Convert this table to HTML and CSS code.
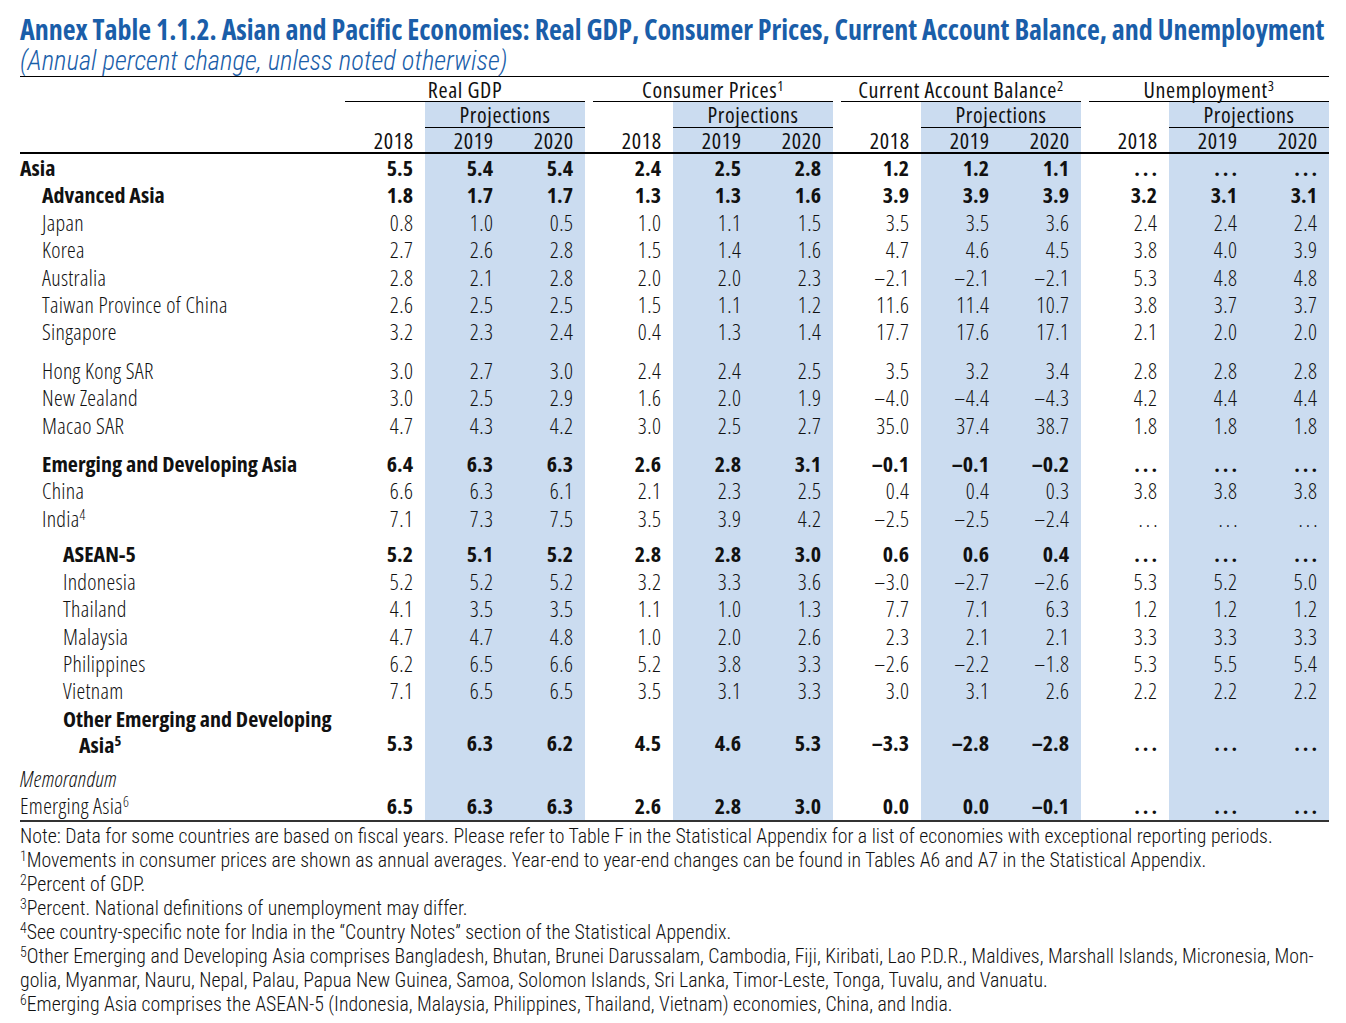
FILE: index.html
```html
<!DOCTYPE html>
<html lang="en">
<head>
<meta charset="utf-8">
<title>Annex Table 1.1.2</title>
<link rel="stylesheet" href="styles.css">
</head>
<body>
<div class="page">
  <h1 class="title">Annex Table 1.1.2. Asian and Pacific Economies: Real GDP, Consumer Prices, Current Account Balance, and Unemployment</h1>
  <p class="subtitle">(Annual percent change, unless noted otherwise)</p>
  <table class="data">
    <colgroup>
      <col class="c-name">
      <col class="c-num"><col class="c-num"><col class="c-num"><col class="c-sp">
      <col class="c-num"><col class="c-num"><col class="c-num"><col class="c-sp">
      <col class="c-num"><col class="c-num"><col class="c-num"><col class="c-sp">
      <col class="c-num"><col class="c-num"><col class="c-num">
    </colgroup>
    <thead>
      <tr class="hr1">
        <th></th>
        <th colspan="3" class="grp">Real GDP</th><th class="s"></th>
        <th colspan="3" class="grp">Consumer Prices<sup>1</sup></th><th class="s"></th>
        <th colspan="3" class="grp">Current Account Balance<sup>2</sup></th><th class="s"></th>
        <th colspan="3" class="grp">Unemployment<sup>3</sup></th>
      </tr>
      <tr class="hr2">
        <th></th>
        <th></th><th colspan="2" class="proj">Projections</th><th class="s"></th>
        <th></th><th colspan="2" class="proj">Projections</th><th class="s"></th>
        <th></th><th colspan="2" class="proj">Projections</th><th class="s"></th>
        <th></th><th colspan="2" class="proj">Projections</th>
      </tr>
      <tr class="hr3">
        <th></th>
        <th>2018</th><th class="p">2019</th><th class="p">2020</th><th class="s"></th>
        <th>2018</th><th class="p">2019</th><th class="p">2020</th><th class="s"></th>
        <th>2018</th><th class="p">2019</th><th class="p">2020</th><th class="s"></th>
        <th>2018</th><th class="p">2019</th><th class="p">2020</th>
      </tr>
    </thead>
    <tbody>
      <tr class="b">
        <th class="n i0">Asia</th>
        <td>5.5</td><td class="p">5.4</td><td class="p">5.4</td><td class="s"></td>
        <td>2.4</td><td class="p">2.5</td><td class="p">2.8</td><td class="s"></td>
        <td>1.2</td><td class="p">1.2</td><td class="p">1.1</td><td class="s"></td>
        <td><span class="na">...</span></td><td class="p"><span class="na">...</span></td><td class="p"><span class="na">...</span></td>
      </tr>
      <tr class="b">
        <th class="n i1">Advanced Asia</th>
        <td>1.8</td><td class="p">1.7</td><td class="p">1.7</td><td class="s"></td>
        <td>1.3</td><td class="p">1.3</td><td class="p">1.6</td><td class="s"></td>
        <td>3.9</td><td class="p">3.9</td><td class="p">3.9</td><td class="s"></td>
        <td>3.2</td><td class="p">3.1</td><td class="p">3.1</td>
      </tr>
      <tr>
        <th class="n i1">Japan</th>
        <td>0.8</td><td class="p">1.0</td><td class="p">0.5</td><td class="s"></td>
        <td>1.0</td><td class="p">1.1</td><td class="p">1.5</td><td class="s"></td>
        <td>3.5</td><td class="p">3.5</td><td class="p">3.6</td><td class="s"></td>
        <td>2.4</td><td class="p">2.4</td><td class="p">2.4</td>
      </tr>
      <tr>
        <th class="n i1">Korea</th>
        <td>2.7</td><td class="p">2.6</td><td class="p">2.8</td><td class="s"></td>
        <td>1.5</td><td class="p">1.4</td><td class="p">1.6</td><td class="s"></td>
        <td>4.7</td><td class="p">4.6</td><td class="p">4.5</td><td class="s"></td>
        <td>3.8</td><td class="p">4.0</td><td class="p">3.9</td>
      </tr>
      <tr>
        <th class="n i1">Australia</th>
        <td>2.8</td><td class="p">2.1</td><td class="p">2.8</td><td class="s"></td>
        <td>2.0</td><td class="p">2.0</td><td class="p">2.3</td><td class="s"></td>
        <td>–2.1</td><td class="p">–2.1</td><td class="p">–2.1</td><td class="s"></td>
        <td>5.3</td><td class="p">4.8</td><td class="p">4.8</td>
      </tr>
      <tr>
        <th class="n i1">Taiwan Province of China</th>
        <td>2.6</td><td class="p">2.5</td><td class="p">2.5</td><td class="s"></td>
        <td>1.5</td><td class="p">1.1</td><td class="p">1.2</td><td class="s"></td>
        <td>11.6</td><td class="p">11.4</td><td class="p">10.7</td><td class="s"></td>
        <td>3.8</td><td class="p">3.7</td><td class="p">3.7</td>
      </tr>
      <tr>
        <th class="n i1">Singapore</th>
        <td>3.2</td><td class="p">2.3</td><td class="p">2.4</td><td class="s"></td>
        <td>0.4</td><td class="p">1.3</td><td class="p">1.4</td><td class="s"></td>
        <td>17.7</td><td class="p">17.6</td><td class="p">17.1</td><td class="s"></td>
        <td>2.1</td><td class="p">2.0</td><td class="p">2.0</td>
      </tr>
      <tr class="gap g11">
        <td></td>
        <td></td><td class="p"></td><td class="p"></td><td class="s"></td>
        <td></td><td class="p"></td><td class="p"></td><td class="s"></td>
        <td></td><td class="p"></td><td class="p"></td><td class="s"></td>
        <td></td><td class="p"></td><td class="p"></td>
      </tr>
      <tr>
        <th class="n i1">Hong Kong SAR</th>
        <td>3.0</td><td class="p">2.7</td><td class="p">3.0</td><td class="s"></td>
        <td>2.4</td><td class="p">2.4</td><td class="p">2.5</td><td class="s"></td>
        <td>3.5</td><td class="p">3.2</td><td class="p">3.4</td><td class="s"></td>
        <td>2.8</td><td class="p">2.8</td><td class="p">2.8</td>
      </tr>
      <tr>
        <th class="n i1">New Zealand</th>
        <td>3.0</td><td class="p">2.5</td><td class="p">2.9</td><td class="s"></td>
        <td>1.6</td><td class="p">2.0</td><td class="p">1.9</td><td class="s"></td>
        <td>–4.0</td><td class="p">–4.4</td><td class="p">–4.3</td><td class="s"></td>
        <td>4.2</td><td class="p">4.4</td><td class="p">4.4</td>
      </tr>
      <tr>
        <th class="n i1">Macao SAR</th>
        <td>4.7</td><td class="p">4.3</td><td class="p">4.2</td><td class="s"></td>
        <td>3.0</td><td class="p">2.5</td><td class="p">2.7</td><td class="s"></td>
        <td>35.0</td><td class="p">37.4</td><td class="p">38.7</td><td class="s"></td>
        <td>1.8</td><td class="p">1.8</td><td class="p">1.8</td>
      </tr>
      <tr class="gap g10">
        <td></td>
        <td></td><td class="p"></td><td class="p"></td><td class="s"></td>
        <td></td><td class="p"></td><td class="p"></td><td class="s"></td>
        <td></td><td class="p"></td><td class="p"></td><td class="s"></td>
        <td></td><td class="p"></td><td class="p"></td>
      </tr>
      <tr class="b">
        <th class="n i1">Emerging and Developing Asia</th>
        <td>6.4</td><td class="p">6.3</td><td class="p">6.3</td><td class="s"></td>
        <td>2.6</td><td class="p">2.8</td><td class="p">3.1</td><td class="s"></td>
        <td>–0.1</td><td class="p">–0.1</td><td class="p">–0.2</td><td class="s"></td>
        <td><span class="na">...</span></td><td class="p"><span class="na">...</span></td><td class="p"><span class="na">...</span></td>
      </tr>
      <tr>
        <th class="n i1">China</th>
        <td>6.6</td><td class="p">6.3</td><td class="p">6.1</td><td class="s"></td>
        <td>2.1</td><td class="p">2.3</td><td class="p">2.5</td><td class="s"></td>
        <td>0.4</td><td class="p">0.4</td><td class="p">0.3</td><td class="s"></td>
        <td>3.8</td><td class="p">3.8</td><td class="p">3.8</td>
      </tr>
      <tr>
        <th class="n i1">India<sup>4</sup></th>
        <td>7.1</td><td class="p">7.3</td><td class="p">7.5</td><td class="s"></td>
        <td>3.5</td><td class="p">3.9</td><td class="p">4.2</td><td class="s"></td>
        <td>–2.5</td><td class="p">–2.5</td><td class="p">–2.4</td><td class="s"></td>
        <td><span class="na">...</span></td><td class="p"><span class="na">...</span></td><td class="p"><span class="na">...</span></td>
      </tr>
      <tr class="gap g8">
        <td></td>
        <td></td><td class="p"></td><td class="p"></td><td class="s"></td>
        <td></td><td class="p"></td><td class="p"></td><td class="s"></td>
        <td></td><td class="p"></td><td class="p"></td><td class="s"></td>
        <td></td><td class="p"></td><td class="p"></td>
      </tr>
      <tr class="b">
        <th class="n i2">ASEAN-5</th>
        <td>5.2</td><td class="p">5.1</td><td class="p">5.2</td><td class="s"></td>
        <td>2.8</td><td class="p">2.8</td><td class="p">3.0</td><td class="s"></td>
        <td>0.6</td><td class="p">0.6</td><td class="p">0.4</td><td class="s"></td>
        <td><span class="na">...</span></td><td class="p"><span class="na">...</span></td><td class="p"><span class="na">...</span></td>
      </tr>
      <tr>
        <th class="n i2">Indonesia</th>
        <td>5.2</td><td class="p">5.2</td><td class="p">5.2</td><td class="s"></td>
        <td>3.2</td><td class="p">3.3</td><td class="p">3.6</td><td class="s"></td>
        <td>–3.0</td><td class="p">–2.7</td><td class="p">–2.6</td><td class="s"></td>
        <td>5.3</td><td class="p">5.2</td><td class="p">5.0</td>
      </tr>
      <tr>
        <th class="n i2">Thailand</th>
        <td>4.1</td><td class="p">3.5</td><td class="p">3.5</td><td class="s"></td>
        <td>1.1</td><td class="p">1.0</td><td class="p">1.3</td><td class="s"></td>
        <td>7.7</td><td class="p">7.1</td><td class="p">6.3</td><td class="s"></td>
        <td>1.2</td><td class="p">1.2</td><td class="p">1.2</td>
      </tr>
      <tr>
        <th class="n i2">Malaysia</th>
        <td>4.7</td><td class="p">4.7</td><td class="p">4.8</td><td class="s"></td>
        <td>1.0</td><td class="p">2.0</td><td class="p">2.6</td><td class="s"></td>
        <td>2.3</td><td class="p">2.1</td><td class="p">2.1</td><td class="s"></td>
        <td>3.3</td><td class="p">3.3</td><td class="p">3.3</td>
      </tr>
      <tr>
        <th class="n i2">Philippines</th>
        <td>6.2</td><td class="p">6.5</td><td class="p">6.6</td><td class="s"></td>
        <td>5.2</td><td class="p">3.8</td><td class="p">3.3</td><td class="s"></td>
        <td>–2.6</td><td class="p">–2.2</td><td class="p">–1.8</td><td class="s"></td>
        <td>5.3</td><td class="p">5.5</td><td class="p">5.4</td>
      </tr>
      <tr>
        <th class="n i2">Vietnam</th>
        <td>7.1</td><td class="p">6.5</td><td class="p">6.5</td><td class="s"></td>
        <td>3.5</td><td class="p">3.1</td><td class="p">3.3</td><td class="s"></td>
        <td>3.0</td><td class="p">3.1</td><td class="p">2.6</td><td class="s"></td>
        <td>2.2</td><td class="p">2.2</td><td class="p">2.2</td>
      </tr>
      <tr class="b two">
        <th class="n i2 hang">Other Emerging and Developing<br>Asia<sup>5</sup></th>
        <td>5.3</td><td class="p">6.3</td><td class="p">6.2</td><td class="s"></td>
        <td>4.5</td><td class="p">4.6</td><td class="p">5.3</td><td class="s"></td>
        <td>–3.3</td><td class="p">–2.8</td><td class="p">–2.8</td><td class="s"></td>
        <td><span class="na">...</span></td><td class="p"><span class="na">...</span></td><td class="p"><span class="na">...</span></td>
      </tr>
      <tr class="gap g8">
        <td></td>
        <td></td><td class="p"></td><td class="p"></td><td class="s"></td>
        <td></td><td class="p"></td><td class="p"></td><td class="s"></td>
        <td></td><td class="p"></td><td class="p"></td><td class="s"></td>
        <td></td><td class="p"></td><td class="p"></td>
      </tr>
      <tr>
        <th class="n i0 memo">Memorandum</th>
        <td></td><td class="p"></td><td class="p"></td><td class="s"></td>
        <td></td><td class="p"></td><td class="p"></td><td class="s"></td>
        <td></td><td class="p"></td><td class="p"></td><td class="s"></td>
        <td></td><td class="p"></td><td class="p"></td>
      </tr>
      <tr class="b last">
        <th class="n i0 reg">Emerging Asia<sup>6</sup></th>
        <td>6.5</td><td class="p">6.3</td><td class="p">6.3</td><td class="s"></td>
        <td>2.6</td><td class="p">2.8</td><td class="p">3.0</td><td class="s"></td>
        <td>0.0</td><td class="p">0.0</td><td class="p">–0.1</td><td class="s"></td>
        <td><span class="na">...</span></td><td class="p"><span class="na">...</span></td><td class="p"><span class="na">...</span></td>
      </tr>
    </tbody>
  </table>
  <div class="notes">
    <p>Note: Data for some countries are based on fiscal years. Please refer to Table F in the Statistical Appendix for a list of economies with exceptional reporting periods.</p>
    <p><sup>1</sup>Movements in consumer prices are shown as annual averages. Year-end to year-end changes can be found in Tables A6 and A7 in the Statistical Appendix.</p>
    <p><sup>2</sup>Percent of GDP.</p>
    <p><sup>3</sup>Percent. National definitions of unemployment may differ.</p>
    <p><sup>4</sup>See country-specific note for India in the “Country Notes” section of the Statistical Appendix.</p>
    <p><sup>5</sup>Other Emerging and Developing Asia comprises Bangladesh, Bhutan, Brunei Darussalam, Cambodia, Fiji, Kiribati, Lao P.D.R., Maldives, Marshall Islands, Micronesia, Mon-<br>golia, Myanmar, Nauru, Nepal, Palau, Papua New Guinea, Samoa, Solomon Islands, Sri Lanka, Timor-Leste, Tonga, Tuvalu, and Vanuatu.</p>
    <p><sup>6</sup>Emerging Asia comprises the ASEAN-5 (Indonesia, Malaysia, Philippines, Thailand, Vietnam) economies, China, and India.</p>
  </div>
</div>
</body>
</html>
```
FILE: styles.css
```css
html, body {
  margin: 0;
  padding: 0;
  background: #ffffff;
}

body {
  color: #111111;
  font-family: "Open Sans", "Roboto", "Liberation Sans", sans-serif;
  font-stretch: 75%;
  font-weight: 350;
}

.page {
  padding: 13px 0 0 20px;
}

.title {
  margin: 0;
  font-size: 28px;
  line-height: 32px;
  font-weight: 700;
  color: #1a5ea9;
  white-space: nowrap;
  letter-spacing: -0.03px;
}

.subtitle {
  margin: 0;
  font-family: "Roboto Condensed", "Roboto", sans-serif;
  font-size: 26.6px;
  line-height: 31px;
  font-style: italic;
  font-weight: 300;
  color: #1a5ea9;
}

sup {
  font-size: 0.66em;
  line-height: 0;
  vertical-align: 0.5em;
}

.data {
  border-collapse: collapse;
  table-layout: fixed;
  width: 1309px;
  border-top: 1px solid #000;
  font-size: 22px;
}

.c-name { width: 325px; }
.c-num { width: 80px; }
.c-sp { width: 8px; }

.data th,
.data td {
  padding: 0 12px 0 0;
  text-align: right;
  white-space: nowrap;
  vertical-align: middle;
}

.data td {
  letter-spacing: 0.5px;
  padding-right: 11.5px;
}

.data .s {
  padding: 0;
}

.data .p,
.data .proj {
  background-color: #cbdcf0;
}

/* header */
.data thead th {
  font-weight: 400;
  letter-spacing: 0.6px;
  padding-right: 11.4px;
}

.hr1 th {
  height: 24px;
  line-height: 24px;
}

.data .hr1 .grp {
  text-align: center;
  padding: 0;
  border-bottom: 1px solid #000;
}

.hr2 th {
  height: 25px;
  line-height: 25px;
}

.data .hr2 .proj {
  text-align: center;
  padding: 0;
  border-bottom: 1px solid #000;
}

.hr3 th {
  height: 24px;
  line-height: 24px;
  border-bottom: 2px solid #000;
}

/* body */
.data tbody td,
.data tbody th {
  height: 27.4px;
  line-height: 27.4px;
}

.data tbody .n {
  text-align: left;
  font-weight: 350;
  letter-spacing: 0.3px;
  padding: 0;
}

.i0 { padding-left: 0; }
.data tbody .i1 { padding-left: 22px; }
.data tbody .i2 { padding-left: 43px; }

.data tbody tr.b td,
.data tbody tr.b .n {
  font-weight: 700;
  letter-spacing: 0;
}

.data tbody tr.b td {
  padding-right: 12px;
}

.data tbody tr.b .reg {
  font-weight: 350;
  letter-spacing: 0.3px;
}

.data tbody .memo {
  font-style: italic;
}

.data tbody tr.two td {
  vertical-align: bottom;
}

.data tbody .hang {
  line-height: 26px;
  padding-left: 59px;
  text-indent: -16px;
  white-space: normal;
}

.data tbody tr.gap td {
  line-height: 0;
  padding: 0;
}

.data tbody tr.g11 td { height: 11px; }
.data tbody tr.g10 td { height: 11px; }
.data tbody tr.g8 td { height: 8px; }

.data tbody tr.last td,
.data tbody tr.last th {
  border-bottom: 2px solid #333;
}

.na {
  letter-spacing: 3px;
  margin-right: -3px;
}

/* notes */
.notes {
  margin-top: 3px;
  font-family: "Roboto Condensed", "Roboto", sans-serif;
  font-size: 19.8px;
  line-height: 24px;
  font-weight: 300;
  color: #111111;
}

.notes p {
  margin: 0;
  white-space: nowrap;
}

.notes sup {
  font-size: 0.7em;
  vertical-align: 0.45em;
}
```
